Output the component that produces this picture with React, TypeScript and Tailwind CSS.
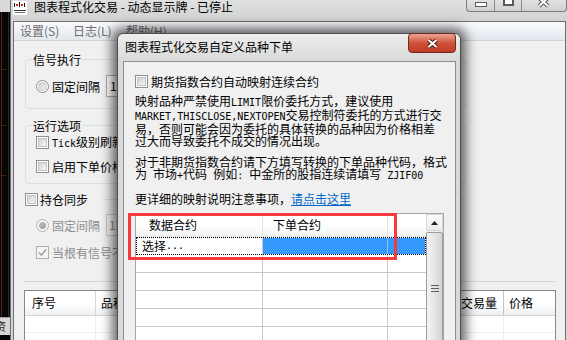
import React from "react";

// SimSun-like half-width latin: 6px per char
const M = ({ children }: { children: React.ReactNode }) => (
  <span className="font-['DejaVu_Sans_Mono',monospace] text-[10px]">{children}</span>
);

function Check({ className = "" }: { className?: string }) {
  return (
    <span className={"w-[13px] h-[13px] shrink-0 border border-[#8e8f8f] bg-white p-px flex " + className}>
      <span className="flex-1 border border-[#c4c4c4] bg-gradient-to-br from-[#d0d0d0] to-[#f7f7f7]" />
    </span>
  );
}

function CheckedDisabled() {
  return (
    <span className="w-[13px] h-[13px] shrink-0 border border-[#b1b1b1] bg-[#f4f4f4] flex items-center justify-center">
      <svg width="9" height="9" viewBox="0 0 9 9">
        <path d="M1 4.5 L3.5 7 L8 1.5" fill="none" stroke="#a0a0a0" strokeWidth="1.6" />
      </svg>
    </span>
  );
}

function Radio({ disabled }: { disabled?: boolean }) {
  if (disabled) {
    return (
      <span className="w-[13px] h-[13px] shrink-0 rounded-full border border-[#b4b4b4] bg-[#f6f6f6] flex items-center justify-center">
        <span className="w-[7px] h-[7px] rounded-full bg-gradient-to-br from-[#bdbdbd] to-[#9c9c9c]" />
      </span>
    );
  }
  return (
    <span className="w-[13px] h-[13px] shrink-0 rounded-full border border-[#8e8f8f] bg-white p-px flex">
      <span className="flex-1 rounded-full border border-[#c4c4c4] bg-gradient-to-br from-[#cdcdcd] to-[#f7f7f7]" />
    </span>
  );
}

function AppIcon() {
  return (
    <svg width="14" height="14" viewBox="0 0 14 14" className="mt-px shrink-0">
      <rect x="0" y="0" width="14" height="14" fill="#ffffff" />
      <rect x="1" y="2" width="1" height="4" fill="#111" />
      <rect x="3" y="3" width="2" height="2" fill="#d21" />
      <rect x="6" y="1" width="1" height="5" fill="#111" />
      <rect x="8" y="3" width="2" height="2" fill="#d21" />
      <rect x="11" y="2" width="1" height="4" fill="#111" />
      <rect x="1" y="9" width="12" height="1" fill="#333" />
      <rect x="2" y="11" width="10" height="1" fill="#777" />
    </svg>
  );
}

function DesktopStrip() {
  return (
    <div className="w-[10px] h-full flex flex-col shrink-0">
      <div className="h-[12px] bg-[#d9d9d9]" />
      <svg width="10" height="305" viewBox="0 0 10 305" className="block">
        <rect width="10" height="305" fill="#060606" />
        <line x1="1.5" y1="0" x2="1.5" y2="305" stroke="#5a2216" />
        <line x1="0" y1="57.5" x2="6" y2="57.5" stroke="#4a1c12" />
        <line x1="0" y1="113.5" x2="6" y2="113.5" stroke="#4a1c12" />
        <line x1="0" y1="163.5" x2="6" y2="163.5" stroke="#4a1c12" />
        <line x1="8.5" y1="0" x2="8.5" y2="305" stroke="#2a2a2a" />
      </svg>
      <div className="h-[18px] bg-[#d6d6d6] overflow-hidden border-t border-[#9a9a9a]">
        <span className="block -ml-[5px] leading-[16px] text-[11px] text-[#222]">资</span>
      </div>
      <div className="flex-1 bg-[#060606]" />
    </div>
  );
}

function TitleButtons() {
  return (
    <div className="ml-auto w-[101px] h-[12px] flex border border-t-0 border-[#7c7c7c] rounded-b-[4px] bg-gradient-to-b from-[#e2e2e2] to-[#d0d0d0] overflow-hidden">
      <div className="w-[28px] border-r border-[#8a8a8a] flex justify-center">
        <span className="mt-[2px] w-[12px] h-[5px] border border-[#5a5a5a] bg-white" />
      </div>
      <div className="w-[27px] border-r border-[#8a8a8a] flex justify-center">
        <span className="-mt-[3px] w-[11px] h-[9px] border-2 border-[#5a5a5a] bg-white" />
      </div>
      <div className="flex-1 flex justify-center">
        <svg width="12" height="8" viewBox="0 0 12 8">
          <path d="M1 -2 L10 6 M10 -2 L1 6" stroke="#555" strokeWidth="4" />
          <path d="M1 -2 L10 6 M10 -2 L1 6" stroke="#fff" strokeWidth="2" />
        </svg>
      </div>
    </div>
  );
}

function MainWindow() {
  return (
    <div className="w-[557px] h-full shrink-0 flex flex-col bg-[#d6d6d6] border-l border-[#6e6e6e]">
      <div className="h-[21px] shrink-0 flex items-start pl-[2px] bg-gradient-to-b from-[#e0e0e0] to-[#d2d2d2]">
        <AppIcon />
        <span className="ml-[7px] mt-px leading-[12px] text-black">图表程式化交易 - 动态显示牌 - 已停止</span>
        <TitleButtons />
      </div>

      <div className="flex-1 ml-[2px] mr-px flex flex-col border border-b-0 border-[#6f6f6f] bg-[#f0f0f0]">
        <div className="h-[19px] shrink-0 flex pl-[6px] border-b border-[#cdd3dc] bg-gradient-to-b from-[#f9fafc] to-[#e3e8ef] text-[#6d6d6d] leading-[18px]">
          <span className="w-[53px]">设置(S)</span>
          <span className="w-[53px]">日志(L)</span>
          <span className="w-[53px]">帮助(H)</span>
        </div>

        <div className="flex-1 flex flex-col pl-[11px] text-black">
          <fieldset className="mt-[12px] w-[441px] rounded-[3px] border border-[#d5dfe5] px-[6px] pb-[11px]">
            <legend className="px-px leading-[13px]">信号执行</legend>
            <div className="mt-[9px] h-[22px] flex items-center pl-[4px]">
              <Radio />
              <span className="ml-[3px] leading-[13px]">固定间隔</span>
              <span className="ml-[6px] w-[60px] h-[22px] border border-[#abadb3] bg-white pl-[3px] leading-[20px]">1</span>
            </div>
          </fieldset>

          <fieldset className="mt-[10px] w-[441px] rounded-[3px] border border-[#d5dfe5] px-[6px] pb-[10px]">
            <legend className="px-px leading-[13px]">运行选项</legend>
            <div className="mt-[4px] h-[13px] flex items-center pl-[4px]">
              <Check />
              <span className="ml-[3px] leading-[13px] whitespace-nowrap"><M>Tick</M>级别刷新</span>
            </div>
            <div className="mt-[11px] h-[13px] flex items-center pl-[4px]">
              <Check />
              <span className="ml-[3px] leading-[13px] whitespace-nowrap">启用下单价格</span>
            </div>
          </fieldset>

          <div className="mt-[9px] h-[13px] w-[441px] flex items-center">
            <Check />
            <span className="ml-[2px] leading-[13px]">持仓同步</span>
            <span className="ml-[15px] flex-1 h-px bg-[#d5dfe5]" />
          </div>

          <div className="mt-[8px] h-[22px] flex items-center pl-[11px] text-[#8d8d8d]">
            <Radio disabled />
            <span className="ml-[3px] leading-[13px]">固定间隔</span>
            <span className="ml-[6px] w-[60px] h-[22px] border border-[#c3c6ca] bg-[#f4f4f4] pl-[2px] leading-[20px]">12</span>
          </div>

          <div className="mt-[10px] h-[13px] flex items-center pl-[11px] text-[#8d8d8d]">
            <CheckedDisabled />
            <span className="ml-[3px] leading-[13px] whitespace-nowrap">当根有信号不再下单</span>
          </div>

          <div className="mt-[22px] -ml-px w-[532px] h-px bg-[#d5d5d5]" />

          <div className="mt-[8px] -ml-px w-[532px] flex-1 flex flex-col border border-b-0 border-[#828790] bg-white">
            <div className="h-[25px] shrink-0 flex border-b border-[#d5d5d5] bg-gradient-to-b from-white via-white to-[#eef0f3]">
              <div className="w-[71px] flex items-center pl-[7px] border-r border-[#d5d5d5]">序号</div>
              <div className="flex-1 flex items-center pl-[5px] border-r border-[#d5d5d5]">品种</div>
              <div className="w-[49px] flex items-center pl-[6px] border-r border-[#c4c4c4]">交易量</div>
              <div className="w-[51px] flex items-center pl-[5px]">价格</div>
            </div>
            <div className="h-[17px] shrink-0 flex border-b border-[#eeeeee]">
              <div className="w-[71px] border-r border-[#eeeeee]" />
              <div className="flex-1 border-r border-[#eeeeee]" />
              <div className="w-[49px] border-r border-[#eeeeee]" />
              <div className="w-[51px]" />
            </div>
            <div className="flex-1 flex">
              <div className="w-[71px] border-r border-[#eeeeee]" />
              <div className="flex-1 border-r border-[#eeeeee]" />
              <div className="w-[49px] border-r border-[#eeeeee]" />
              <div className="w-[51px]" />
            </div>
          </div>
        </div>
      </div>
    </div>
  );
}

function EmptyRow() {
  return (
    <div className="h-[18px] shrink-0 flex border-b border-[#c8c8c8]">
      <div className="w-[127px] border-r border-[#c8c8c8]" />
      <div className="w-[125px] border-r border-[#c8c8c8]" />
      <div className="flex-1" />
    </div>
  );
}

function MappingTable() {
  return (
    <div className="relative mt-[8px] w-[309px] h-[140px] shrink-0 flex border border-b-0 border-[#a6a6a6] bg-white">
      <div className="w-[290px] flex flex-col">
        <div className="h-[23px] shrink-0 flex border-b border-[#e2e2e2] bg-gradient-to-b from-white via-white to-[#f2f3f5]">
          <div className="w-[127px] flex items-center pl-[13px] border-r border-[#e2e2e2]">数据合约</div>
          <div className="w-[125px] flex items-center pl-[10px] border-r border-[#e2e2e2]">下单合约</div>
          <div className="flex-1" />
        </div>
        <div className="h-[18px] shrink-0 flex outline-1 outline-dotted outline-black -outline-offset-1">
          <div className="w-[127px] flex items-center pl-[6px] border-r border-[#c8c8c8] whitespace-nowrap leading-[14px]">
            选择<M>...</M>
          </div>
          <div className="w-[125px] mt-px mb-px bg-[#3399ff] border-r border-[#8cc2fb]" />
          <div className="flex-1 mt-px mb-px mr-px bg-[#3399ff]" />
        </div>
        <EmptyRow />
        <EmptyRow />
        <EmptyRow />
        <EmptyRow />
        <EmptyRow />
        <EmptyRow />
      </div>

      <div className="w-[17px] flex flex-col bg-[#ececec]">
        <div className="h-[17px] shrink-0 flex items-center justify-center border border-[#d6d6d6] rounded-[2px] bg-gradient-to-b from-[#fafafa] to-[#ececec]">
          <svg width="7" height="4" viewBox="0 0 7 4">
            <path d="M0 4 L3.5 0 L7 4 Z" fill="#222" />
          </svg>
        </div>
        <div className="mt-px flex-1 flex flex-col items-center border border-[#9d9d9d] rounded-[2px] bg-gradient-to-r from-[#f4f4f4] via-[#e6e6e6] to-[#d4d4d4]">
          <div className="mt-[52px] w-[8px] flex flex-col gap-[2px]">
            <span className="h-px bg-[#5c5c5c]" />
            <span className="h-px bg-[#5c5c5c]" />
            <span className="h-px bg-[#5c5c5c]" />
          </div>
        </div>
      </div>

      <div className="absolute -left-[8px] -top-px w-[269px] h-[47px] border-[3px] border-[#f53b3b]" />
    </div>
  );
}

function MappingDialog() {
  return (
    <div className="absolute left-[117px] top-[33px] w-[344px] h-[320px] flex flex-col border border-[#4f4f4f] rounded-t-[6px] bg-[#d9d9d9] shadow-[0_0_12px_5px_rgba(0,0,0,0.6)]">
      <div className="relative h-[27px] shrink-0 flex pl-[7px] pt-[6px] rounded-t-[6px] bg-gradient-to-b from-[#eeeeee] to-[#d9d9d9]">
        <span className="leading-[13px] text-black">图表程式化交易自定义品种下单</span>
        <div className="absolute right-[4px] -top-px w-[48px] h-[20px] flex items-center justify-center border border-[#6e2a1f] rounded-[4px] bg-gradient-to-b from-[#e9a794] via-[#cf5139] to-[#c03c25]">
          <svg width="13" height="11" viewBox="0 0 13 11">
            <path d="M2.5 2 L10.5 9 M10.5 2 L2.5 9" stroke="#4a1d14" strokeWidth="4" />
            <path d="M2.5 2 L10.5 9 M10.5 2 L2.5 9" stroke="#ffffff" strokeWidth="2" />
          </svg>
        </div>
      </div>

      <div className="flex-1 ml-[5px] mr-[4px] flex flex-col pl-[11px] border border-b-0 border-[#8d8d8d] bg-[#f0f0f0] text-black">
        <div className="mt-[13px] h-[13px] flex items-center">
          <Check />
          <span className="ml-[3px] leading-[13px]">期货指数合约自动映射连续合约</span>
        </div>

        <div className="mt-[7px] leading-[12px] whitespace-nowrap">
          映射品种严禁使用<M>LIMIT</M>限价委托方式，建议使用<br />
          <M>MARKET,THISCLOSE,NEXTOPEN</M>交易控制符委托的方式进行交<br />
          易，否则可能会因为委托的具体转换的品种因为价格相差<br />
          过大而导致委托不成交的情况出现。
        </div>

        <div className="mt-[9px] leading-[12px] whitespace-nowrap">
          对于非期货指数合约请下方填写转换的下单品种代码，格式<br />
          为<M> </M>市场<M>+</M>代码<M> </M>例如<M>: </M>中金所的股指连续请填写<M> ZJIF00</M>
        </div>

        <div className="mt-[11px] leading-[12px] whitespace-nowrap">
          更详细的映射说明注意事项，<span className="text-[#0066cc] underline">请点击这里</span>
        </div>

        <MappingTable />
      </div>
    </div>
  );
}

export default function App() {
  return (
    <div className="relative w-[567px] h-[340px] overflow-hidden flex bg-[#060606] text-[12px] font-['Noto_Sans_CJK_SC','Noto_Sans',sans-serif]">
      <DesktopStrip />
      <MainWindow />
      <MappingDialog />
    </div>
  );
}
